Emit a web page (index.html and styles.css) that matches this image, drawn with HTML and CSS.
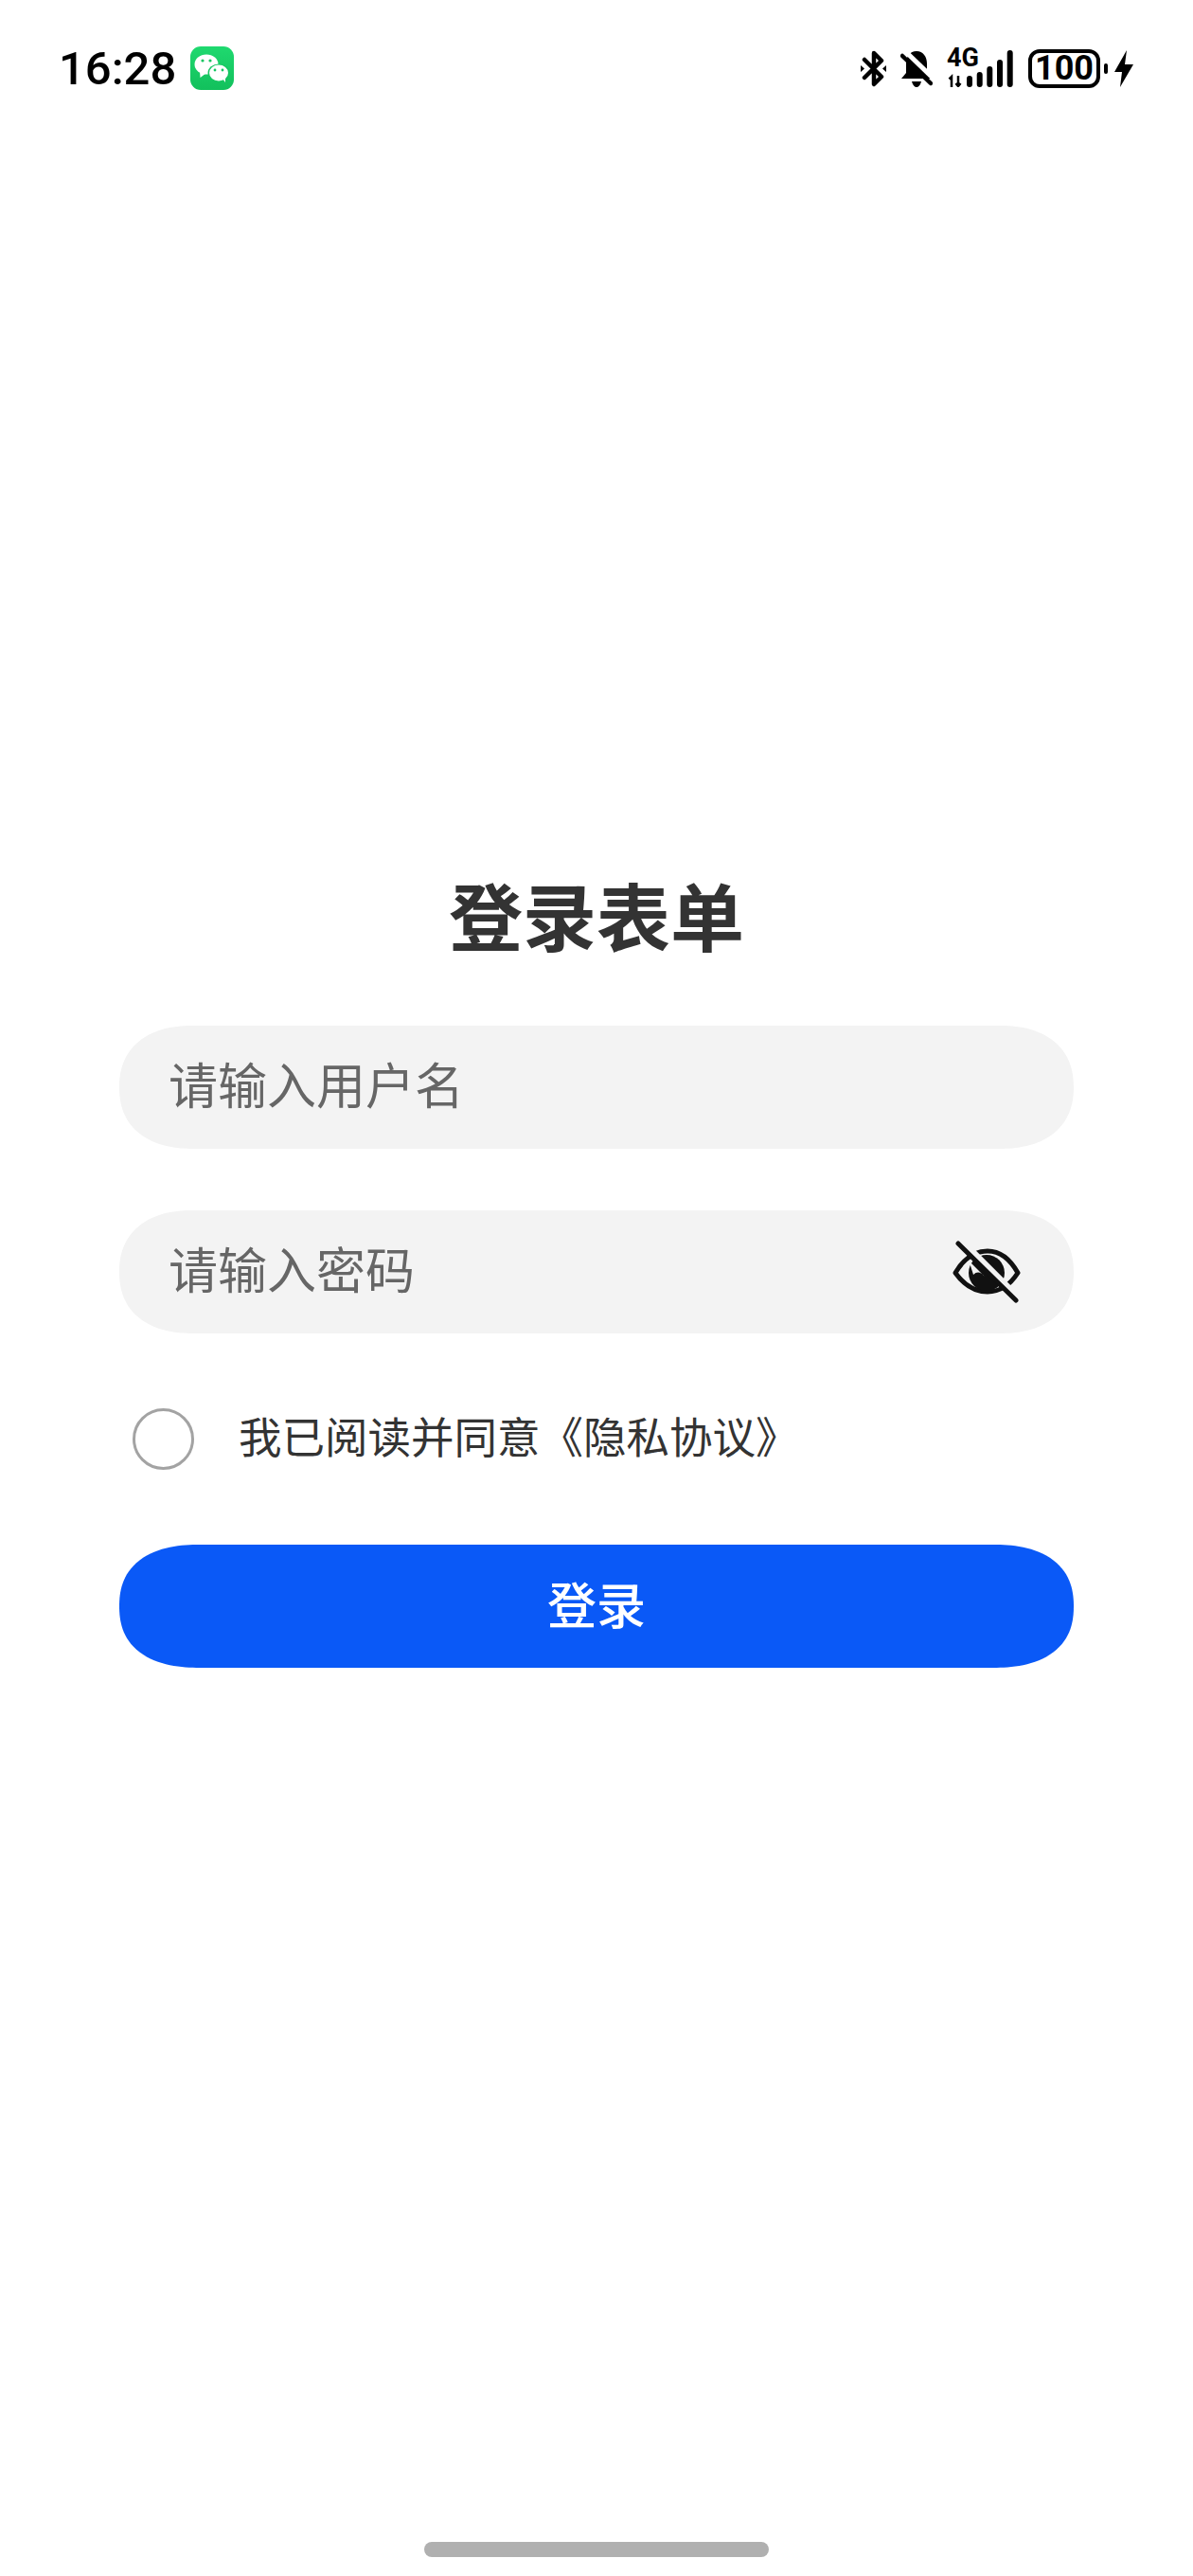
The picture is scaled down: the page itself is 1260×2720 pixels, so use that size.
FILE: index.html
```html
<!DOCTYPE html>
<html lang="zh-CN">

<head>
    <meta charset="UTF-8">
    <meta name="viewport" content="width=device-width, initial-scale=1.0">
    <title>登录表单</title>
    <link rel="stylesheet" href="styles.css">
</head>

<body>
    <div class="page">
        <header class="statusBar">
            <div class="statusLeft">
                <span class="statusTime">16:28</span>
                <svg class="wechatIcon" width="46" height="46" viewBox="0 0 46 46">
                    <defs>
                        <linearGradient id="wechatGreen" x1="0" y1="0" x2="0" y2="1">
                            <stop offset="0" stop-color="#1fd96f" />
                            <stop offset="1" stop-color="#12c05c" />
                        </linearGradient>
                    </defs>
                    <rect width="46" height="46" rx="11" fill="url(#wechatGreen)" />
                    <ellipse cx="17" cy="19" rx="12.5" ry="10.5" fill="#fff" />
                    <path d="M10 26 L10.500 33 L17 28 Z" fill="#fff" />
                    <ellipse cx="30" cy="28" rx="11.500" ry="9.500" fill="#16c561" />
                    <ellipse cx="30" cy="28" rx="10" ry="8.500" fill="#fff" />
                    <path d="M34 34 L37 38 L37 31 Z" fill="#fff" />
                    <circle cx="13" cy="15" r="1.600" fill="#16c561" />
                    <circle cx="21" cy="15" r="1.600" fill="#16c561" />
                    <circle cx="26" cy="25" r="1.400" fill="#16c561" />
                    <circle cx="34" cy="25" r="1.400" fill="#16c561" />
                </svg>
            </div>
            <div class="statusRight">
                <svg width="27" height="39" viewBox="0 0 27 39">
                    <path d="M4 10 L22 28 L14 36 V3 L22 11 L4 29" fill="none" stroke="#000" stroke-width="4.500" stroke-linejoin="round" stroke-linecap="round" />
                    <path d="M0 16 L4 19.500 L0 23 Z M27 16 L23 19.500 L27 23 Z" fill="#000" />
                </svg>
                <svg width="34" height="39" viewBox="0 0 34 39">
                    <path d="M17 1 C24 1 28 7 28 14 V24 L33 30 H1 L6 24 V14 C6 7 10 1 17 1 Z" fill="#000" />
                    <path d="M12 33 H22 C21 37 19 39 17 39 C15 39 13 37 12 33 Z" fill="#000" />
                    <path d="M6 2 L36 31" stroke="#fff" stroke-width="5" />
                    <path d="M2 6 L32 35" stroke="#000" stroke-width="4.500" stroke-linecap="round" />
                </svg>
                <div class="network">
                    <span class="networkText">4G</span>
                    <svg width="71" height="39" viewBox="0 0 71 39">
                        <path d="M5 39 V28 M2.500 30.500 L5 28 L5 39 M12 27 V38 M9.500 35 L12 38 L14.500 35" fill="none" stroke="#000" stroke-width="2.500" />
                        <rect x="21" y="27" width="6" height="12" rx="3" />
                        <rect x="31.700" y="23" width="6" height="16" rx="3" />
                        <rect x="42.300" y="17" width="6" height="22" rx="3" />
                        <rect x="53" y="10" width="6" height="29" rx="3" />
                        <rect x="63.700" y="0" width="6" height="39" rx="3" />
                    </svg>
                </div>
                <div class="battery">
                    <div class="batteryBody">100</div>
                    <div class="batteryNub"></div>
                </div>
                <svg width="20" height="39" viewBox="0 0 20 39">
                    <path d="M13 0 L0 23 H8 L6 39 L20 15 H11 Z" fill="#000" />
                </svg>
            </div>
        </header>

        <main class="loginSection">
            <h1 class="loginTitle">登录表单</h1>
            <form class="loginForm">
                <div class="inputContainer">
                    <input type="text" placeholder="请输入用户名" />
                </div>
                <div class="inputContainer">
                    <input type="password" placeholder="请输入密码" />
                    <svg class="eyeIcon" width="72" height="66" viewBox="0 0 72 66">
                        <path d="M3 34 C13 17 25 11 37 11 C49 11 60 18 69 34 C60 48 49 54 37 54 C25 54 13 48 3 34 Z" fill="none" stroke="#111" stroke-width="5" stroke-linejoin="round" />
                        <circle cx="36" cy="34" r="19" fill="#111" />
                        <path d="M18 22 L34 38 C30 33 26 32 22 36 C21 32 19 28 18 22 Z" fill="#f3f3f3" />
                        <path d="M11 1 L73 63" stroke="#f3f3f3" stroke-width="6" />
                        <path d="M6 3 L67 63" stroke="#111" stroke-width="5" stroke-linecap="round" />
                    </svg>
                </div>
                <label class="agreeRow">
                    <span class="agreeCircle"></span>
                    <span class="agreeText">我已阅读并同意《隐私协议》</span>
                </label>
                <button class="loginButton" type="button">登录</button>
            </form>
        </main>

        <div class="homeBar"></div>
    </div>
</body>

</html>
```

FILE: styles.css
```css
* {
    box-sizing: border-box;
    font-family: 'Noto Sans CJK SC', 'Noto Sans', sans-serif;
}

body {
    margin: 0;
    background-color: #fff;
}

.page {
    display: flex;
    flex-direction: column;
    align-items: center;
    height: 2720px;
    overflow: hidden;
}

.statusBar {
    display: flex;
    justify-content: space-between;
    align-items: center;
    width: 100%;
    height: 144px;
    padding: 0 63px 0 62px;
}

.statusLeft {
    display: flex;
    align-items: center;
    gap: 15px;
}

.statusTime {
    font-family: 'Roboto', sans-serif;
    font-size: 49px;
    font-weight: 500;
    color: #000;
}

.statusRight {
    display: flex;
    align-items: center;
    gap: 15px;
}

.network {
    position: relative;
    height: 39px;
}

.networkText {
    position: absolute;
    top: -4px;
    left: 0;
    font-family: 'Roboto', sans-serif;
    font-size: 27px;
    line-height: 24px;
    font-weight: 700;
}

.battery {
    display: flex;
    align-items: center;
    gap: 4px;
    margin-right: -8px;
}

.batteryBody {
    display: flex;
    justify-content: center;
    align-items: center;
    width: 76px;
    height: 41px;
    border: 4px solid #000;
    border-radius: 12px;
    font-family: 'Roboto', sans-serif;
    font-size: 36px;
    font-weight: 700;
    color: #000;
}

.batteryNub {
    width: 4px;
    height: 11px;
    border-radius: 2px;
    background-color: #000;
}

.loginSection {
    width: 1008px;
    margin-top: 771px;
}

.loginTitle {
    margin: 0 0 68px;
    font-size: 78px;
    line-height: 100px;
    font-weight: 700;
    text-align: center;
    color: #333;
}

.loginForm {
    display: flex;
    flex-direction: column;
}

.inputContainer {
    display: flex;
    align-items: center;
    height: 130px;
    margin-bottom: 65px;
    padding: 0 33px 0 52px;
    border-radius: 78px / 65px;
    corner-shape: superellipse(1.2);
    background-color: #f3f3f3;
}

.inputContainer input {
    flex: 1;
    min-width: 0;
    padding: 0 0 10px;
    border: none;
    outline: none;
    background: transparent;
    font-size: 52px;
    color: #333;
}

.inputContainer input::placeholder {
    color: #666;
    opacity: 1;
}

.eyeIcon {
    flex-shrink: 0;
    margin-right: 23px;
}

.agreeRow {
    display: flex;
    align-items: center;
    gap: 47px;
    height: 64px;
    margin-top: 14px;
    margin-bottom: 80px;
    padding-left: 14px;
}

.agreeCircle {
    width: 65px;
    height: 65px;
    border: 3.500px solid #a3a3a3;
    border-radius: 50%;
}

.agreeText {
    padding-bottom: 9px;
    font-size: 45.500px;
    color: #333;
}

.loginButton {
    height: 130px;
    padding: 0 0 8px;
    border: none;
    border-radius: 85px / 65px;
    corner-shape: superellipse(1.25);
    background-color: #0a59f7;
    font-size: 52px;
    font-weight: 500;
    color: #fff;
}

.homeBar {
    width: 364px;
    height: 16px;
    margin-top: auto;
    margin-bottom: 20px;
    border-radius: 8px;
    background-color: #b0b0b0;
}
```
